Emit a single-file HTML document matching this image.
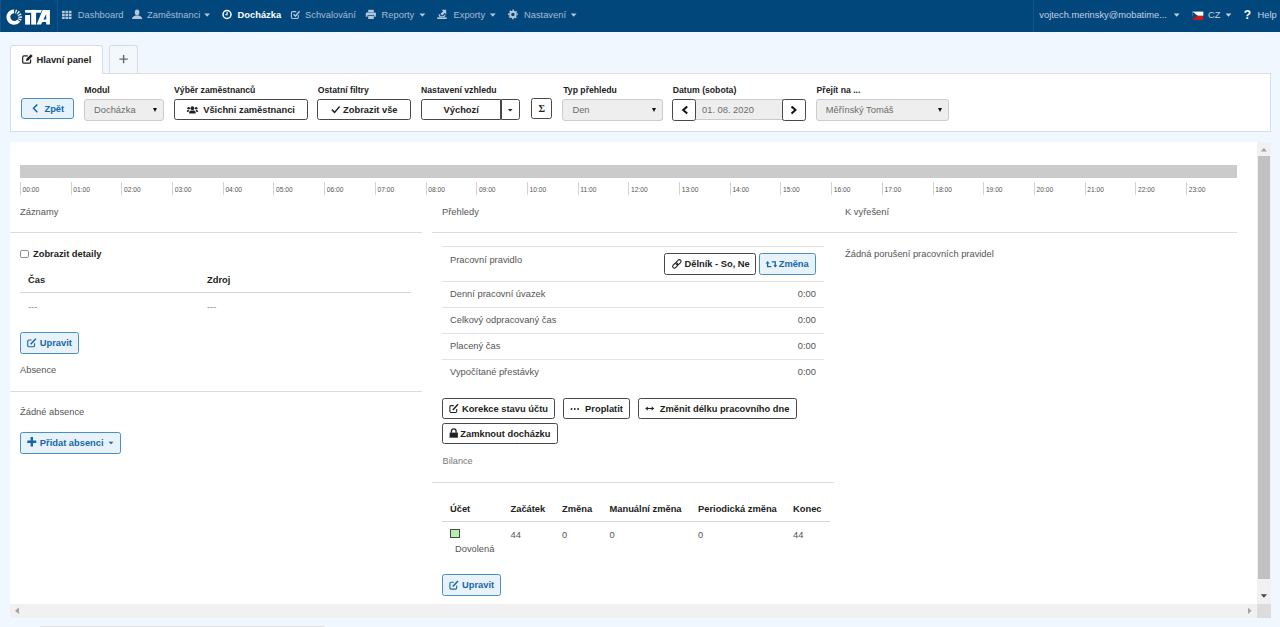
<!DOCTYPE html>
<html lang="cs">
<head>
<meta charset="utf-8">
<title>iTA - Docházka</title>
<style>
*{box-sizing:border-box;margin:0;padding:0}
html,body{width:1280px;height:627px;overflow:hidden}
body{background:#f0f7fe;font-family:"Liberation Sans",Arial,sans-serif;font-size:9.33px;color:#555;position:relative}
.abs{position:absolute;white-space:nowrap}
/* navbar */
#nav{position:absolute;left:0;top:0;width:1280px;height:32px;background:#02477b}
#nav .it{position:absolute;top:0;height:32px;line-height:30.6px;color:#a5bbd3;white-space:nowrap;font-size:9.33px}
#nav .it.act{color:#fff;font-weight:bold}
#nav svg{position:absolute}
.caret{position:absolute;top:13.5px;width:0;height:0;border-left:2.9px solid transparent;border-right:2.9px solid transparent;border-top:3.1px solid #a9bfd6}
#nav .ur{color:#c3d2e3}
.caret.ur{border-top-color:#c3d2e3}
/* tabs */
.tab{position:absolute;top:45px;height:29px;z-index:2;border:1px solid #d9dde2;border-bottom:none;border-radius:3px 3px 0 0;background:#fff;font-weight:bold;color:#222;line-height:28px}
#filter{position:absolute;left:10px;top:72.5px;width:1261px;height:59.4px;background:#fff;border:1px solid #cfe0f5;border-top-color:#dcdfe3}
.lbl{position:absolute;top:84.7px;font-weight:bold;color:#222;font-size:8.67px;white-space:nowrap;line-height:10px}
.btn{position:absolute;height:21px;border:1px solid #484848;border-radius:2.5px;background:#fff;color:#222;font-weight:bold;text-align:center;line-height:20.5px;white-space:nowrap;font-size:9.33px}
.btn.blue{border-color:#4a90c8;background:#e8f2fb;color:#1467ad}
.sel{position:absolute;height:22px;border:1px solid #ccc;border-radius:3px;background:#eee;color:#6c6c6c;line-height:21px;padding-left:9px;font-size:9.33px;white-space:nowrap}
.sel.noarr:after{display:none}
.sel:after{content:"";position:absolute;right:6px;top:8px;border-left:2.5px solid transparent;border-right:2.5px solid transparent;border-top:4px solid #111}
/* content */
#content{position:absolute;left:10px;top:141.6px;width:1247px;height:462.4px;background:#fff}
.hr{position:absolute;height:1px;background:#dcdcdc}
.h{position:absolute;color:#555;font-size:9.33px;white-space:nowrap;line-height:13.2px}
.t{position:absolute;white-space:nowrap;line-height:13.2px;color:#555}
.b{font-weight:bold;color:#222}
.tick{position:absolute;top:182px;width:1px;height:13px;background:#d2d2d2}
.tl{position:absolute;top:185.8px;font-size:6.67px;color:#555;line-height:8px}
</style>
</head>
<body>
<div id="nav">
  <div class="abs" style="left:0;top:0;width:1px;height:32px;background:#0f548c"></div>
  <div class="abs" style="left:57px;top:0;width:1px;height:32px;background:#0f548c"></div>
  <div class="abs" style="left:1033px;top:0;width:1px;height:32px;background:#0f548c"></div>
  <div class="it" style="left:77.8px">Dashboard</div>
  <div class="it" style="left:147px">Zaměstnanci</div>
  <div class="it act" style="left:237.6px">Docházka</div>
  <div class="it" style="left:305px">Schvalování</div>
  <div class="it" style="left:381.6px">Reporty</div>
  <div class="it" style="left:453.5px">Exporty</div>
  <div class="it" style="left:524px">Nastavení</div>
  <div class="it ur" style="left:1039.3px">vojtech.merinsky@mobatime...</div>
  <div class="it ur" style="left:1208px">CZ</div>
  <div class="it act" style="left:1243.8px;font-size:12px;line-height:31px">?</div>
  <div class="it ur" style="left:1257.6px">Help</div>
</div>

<div class="tab" style="left:10px;width:92.5px;padding-left:25.4px">Hlavní panel</div>
<div class="tab" style="left:109px;width:29.2px;background:#f3f8fd;height:27.5px"></div>
<div id="filter"></div>

<div class="btn blue" style="left:20.6px;top:97.9px;width:53.4px;height:21.5px;padding-left:14px;border-radius:3px;line-height:20.5px">Zpět</div>
<div class="lbl" style="left:84.3px">Modul</div>
<div class="sel" style="left:84.1px;top:98.6px;width:79.7px">Docházka</div>
<div class="lbl" style="left:174.1px">Výběr zaměstnanců</div>
<div class="btn" style="left:174.1px;top:99.4px;width:133.5px;padding-left:16.5px">Všichni zaměstnanci</div>
<div class="lbl" style="left:317.8px">Ostatní filtry</div>
<div class="btn" style="left:317.3px;top:99.4px;width:94px;padding-left:12px">Zobrazit vše</div>
<div class="lbl" style="left:421px">Nastavení vzhledu</div>
<div class="btn" style="left:421.2px;top:99.4px;width:80px;border-radius:2.5px 0 0 2.5px">Výchozí</div>
<div class="btn" style="left:500.5px;top:99.4px;width:19.7px;border-radius:0 2.5px 2.5px 0"></div>
<div class="btn" style="left:531.3px;top:97.9px;width:21px;font-family:'Liberation Serif',serif;font-size:10px">Σ</div>
<div class="lbl" style="left:563.2px">Typ přehledu</div>
<div class="sel" style="left:562.4px;top:99.4px;width:100.2px">Den</div>
<div class="lbl" style="left:672.8px">Datum (sobota)</div>
<div class="sel noarr" style="left:695px;top:99.4px;width:88px;border-radius:0;padding-left:6px;height:20.8px">01. 08. 2020</div>
<div class="btn" style="left:672.2px;top:98.7px;width:23.8px;height:22.3px"></div>
<div class="btn" style="left:782.2px;top:98.7px;width:23.8px;height:22.3px"></div>
<div class="lbl" style="left:816.6px">Přejít na ...</div>
<div class="sel" style="left:815.8px;top:98.7px;width:133.6px;height:22.3px;line-height:20.5px;padding-left:9px">Měřínský Tomáš</div>

<div id="content"></div>
<!--CONTENT-START-->
<div class="abs" style="left:20px;top:165.2px;width:1217px;height:12.8px;background:#cbcbcb"></div>
<div class="tick" style="left:19.9px"></div><div class="tl" style="left:22.6px">00:00</div>
<div class="tick" style="left:70.6px"></div><div class="tl" style="left:73.3px">01:00</div>
<div class="tick" style="left:121.3px"></div><div class="tl" style="left:124.0px">02:00</div>
<div class="tick" style="left:172.0px"></div><div class="tl" style="left:174.7px">03:00</div>
<div class="tick" style="left:222.7px"></div><div class="tl" style="left:225.4px">04:00</div>
<div class="tick" style="left:273.4px"></div><div class="tl" style="left:276.1px">05:00</div>
<div class="tick" style="left:324.1px"></div><div class="tl" style="left:326.8px">06:00</div>
<div class="tick" style="left:374.8px"></div><div class="tl" style="left:377.5px">07:00</div>
<div class="tick" style="left:425.5px"></div><div class="tl" style="left:428.2px">08:00</div>
<div class="tick" style="left:476.2px"></div><div class="tl" style="left:478.9px">09:00</div>
<div class="tick" style="left:526.9px"></div><div class="tl" style="left:529.6px">10:00</div>
<div class="tick" style="left:577.6px"></div><div class="tl" style="left:580.3px">11:00</div>
<div class="tick" style="left:628.3px"></div><div class="tl" style="left:631.0px">12:00</div>
<div class="tick" style="left:679.0px"></div><div class="tl" style="left:681.7px">13:00</div>
<div class="tick" style="left:729.7px"></div><div class="tl" style="left:732.4px">14:00</div>
<div class="tick" style="left:780.4px"></div><div class="tl" style="left:783.1px">15:00</div>
<div class="tick" style="left:831.1px"></div><div class="tl" style="left:833.8px">16:00</div>
<div class="tick" style="left:881.8px"></div><div class="tl" style="left:884.5px">17:00</div>
<div class="tick" style="left:932.5px"></div><div class="tl" style="left:935.2px">18:00</div>
<div class="tick" style="left:983.2px"></div><div class="tl" style="left:985.9px">19:00</div>
<div class="tick" style="left:1033.9px"></div><div class="tl" style="left:1036.6px">20:00</div>
<div class="tick" style="left:1084.6px"></div><div class="tl" style="left:1087.3px">21:00</div>
<div class="tick" style="left:1135.3px"></div><div class="tl" style="left:1138.0px">22:00</div>
<div class="tick" style="left:1186.0px"></div><div class="tl" style="left:1188.7px">23:00</div>

<!-- col1 -->
<div class="h" style="left:20px;top:206px">Záznamy</div>
<div class="hr" style="left:10px;top:232px;width:412px"></div>
<div class="abs" style="left:20.2px;top:249.5px;width:8.8px;height:8.4px;border:1px solid #8c8c8c;border-radius:1.8px;background:#fff"></div>
<div class="t b" style="left:33px;top:247.8px">Zobrazit detaily</div>
<div class="t b" style="left:28px;top:273.7px">Čas</div>
<div class="t b" style="left:207px;top:273.7px">Zdroj</div>
<div class="hr" style="left:20px;top:292.4px;width:391px;background:#d8d8d8;height:1px"></div>
<div class="t" style="left:28px;top:301px;color:#888">---</div>
<div class="t" style="left:207px;top:301px;color:#888">---</div>
<div class="btn blue" style="left:20px;top:332.1px;width:58.8px;height:21.6px;text-align:left;padding-left:18.8px">Upravit</div>
<div class="h" style="left:20px;top:364px">Absence</div>
<div class="hr" style="left:10px;top:391px;width:412px"></div>
<div class="t" style="left:20px;top:406px">Žádné absence</div>
<div class="btn blue" style="left:20px;top:431.7px;width:101px;height:22px;text-align:left;padding-left:18.8px;line-height:21px">Přidat absenci</div>
<!-- col2 -->
<div class="h" style="left:442px;top:206px">Přehledy</div>
<div class="hr" style="left:432px;top:232px;width:805px"></div>
<div class="hr" style="left:442px;top:246px;width:382px;background:#e3e3e3"></div>
<div class="t" style="left:450px;top:254px">Pracovní pravidlo</div>
<div class="btn" style="left:664.3px;top:253.4px;width:92.2px;height:21.3px;text-align:left;padding-left:19.2px">Dělník - So, Ne</div>
<div class="btn blue" style="left:759px;top:253.4px;width:57px;height:21.3px;text-align:left;padding-left:18.7px">Změna</div>
<div class="hr" style="left:442px;top:281px;width:382px;background:#e3e3e3"></div>
<div class="t" style="left:450px;top:288px">Denní pracovní úvazek</div><div class="t" style="left:776px;width:40px;text-align:right;top:288px">0:00</div>
<div class="hr" style="left:442px;top:307px;width:382px;background:#e3e3e3"></div>
<div class="t" style="left:450px;top:314px">Celkový odpracovaný čas</div><div class="t" style="left:776px;width:40px;text-align:right;top:314px">0:00</div>
<div class="hr" style="left:442px;top:333px;width:382px;background:#e3e3e3"></div>
<div class="t" style="left:450px;top:340px">Placený čas</div><div class="t" style="left:776px;width:40px;text-align:right;top:340px">0:00</div>
<div class="hr" style="left:442px;top:359px;width:382px;background:#e3e3e3"></div>
<div class="t" style="left:450px;top:366px">Vypočítané přestávky</div><div class="t" style="left:776px;width:40px;text-align:right;top:366px">0:00</div>
<div class="btn" style="left:442.4px;top:398.1px;width:112.5px;height:21.1px;text-align:left;padding-left:18.5px">Korekce stavu účtu</div>
<div class="btn" style="left:563.1px;top:398.1px;width:66.8px;height:21.1px;text-align:left;padding-left:21px">Proplatit</div>
<div class="btn" style="left:637.8px;top:398.1px;width:159px;height:21.1px;text-align:left;padding-left:21px">Změnit délku pracovního dne</div>
<div class="btn" style="left:442.4px;top:423.1px;width:115.4px;height:21.1px;text-align:left;padding-left:16.9px">Zamknout docházku</div>
<div class="h" style="left:442.6px;top:455.3px;font-size:9.2px;color:#777">Bilance</div>
<div class="hr" style="left:432px;top:481.5px;width:402px"></div>
<div class="t b" style="left:450px;top:502.6px">Účet</div>
<div class="t b" style="left:510.5px;top:502.6px">Začátek</div>
<div class="t b" style="left:562px;top:502.6px">Změna</div>
<div class="t b" style="left:609.5px;top:502.6px">Manuální změna</div>
<div class="t b" style="left:698px;top:502.6px">Periodická změna</div>
<div class="t b" style="left:793px;top:502.6px">Konec</div>
<div class="hr" style="left:442px;top:521.3px;width:388px;background:#d8d8d8;height:1px"></div>
<div class="abs" style="left:450.3px;top:529.1px;width:9.8px;height:9.4px;border:1px solid #4a4a4a;background:#b5efb0"></div>
<div class="t" style="left:455px;top:542.5px">Dovolená</div>
<div class="t" style="left:510.5px;top:529px">44</div>
<div class="t" style="left:562px;top:529px">0</div>
<div class="t" style="left:609.5px;top:529px">0</div>
<div class="t" style="left:698px;top:529px">0</div>
<div class="t" style="left:793px;top:529px">44</div>
<div class="btn blue" style="left:442.2px;top:574.4px;width:58.8px;height:21.2px;text-align:left;padding-left:18.8px">Upravit</div>
<!-- col3 -->
<div class="h" style="left:845px;top:206px">K vyřešení</div>
<div class="t" style="left:845px;top:248px">Žádná porušení pracovních pravidel</div>
<!-- scrollbars -->
<div class="abs" style="left:40px;top:626px;width:285px;height:1px;background:#dde1e5"></div>
<div class="abs" style="left:1257px;top:141.5px;width:14px;height:462.5px;background:#f1f1f1"></div>
<div class="abs" style="left:1258.1px;top:156.1px;width:11.5px;height:422.6px;background:#c1c1c1"></div>
<div class="abs" style="left:10px;top:604px;width:1247px;height:13.7px;background:#f1f1f1"></div>
<div class="abs" style="left:1257px;top:604px;width:14px;height:13.7px;background:#dcdcdc"></div>
<!--CONTENT-END-->
<svg id="ico" style="position:absolute;left:0;top:0;pointer-events:none;z-index:5" width="1280" height="627" viewBox="0 0 1280 627">
<!-- logo -->
<g fill="none" stroke="#fff" stroke-width="3.8"><path d="M18.77 20.67A5.8 5.8 0 1 1 14.10 11.30M15.41 11.43A5.8 5.8 0 0 1 16.56 11.80M17.61 12.41A5.8 5.8 0 0 1 18.51 13.22M19.22 14.20A5.8 5.8 0 0 1 19.72 15.31M19.97 16.49A5.8 5.8 0 0 1 19.97 17.71M19.78 18.70A5.8 5.8 0 0 1 19.32 19.82"/></g>
<g fill="#fff">
<rect x="25.1" y="15" width="4.9" height="9.6"/>
<path d="M25.1 9.9H41.9L40.8 12.7H25.1z"/>
<rect x="31.2" y="9.9" width="4.9" height="14.7"/>
<path fill-rule="evenodd" d="M42.6 9.9H49.9V24.6H46.2V22H42.4L41 24.6H36.6zM46.2 14.1V19.5H43.4z"/>
</g>
<!-- carets --><path d="M204.2 13.4H210.0L207.1 16.7z" fill="#b4c6da"/><path d="M419.5 13.4H425.3L422.4 16.7z" fill="#b4c6da"/><path d="M489.9 13.4H495.7L492.8 16.7z" fill="#b4c6da"/><path d="M570.8 13.4H576.6L573.7 16.7z" fill="#b4c6da"/><path d="M1173.8 13.4H1179.6L1176.7 16.7z" fill="#c3d2e3"/><path d="M1225.6 13.4H1231.4L1228.5 16.7z" fill="#c3d2e3"/>
<!-- th -->
<g fill="#b4c6da">
<rect x="62" y="10.8" width="2.7" height="2.3"/><rect x="65.4" y="10.8" width="2.7" height="2.3"/><rect x="68.8" y="10.8" width="2.7" height="2.3"/>
<rect x="62" y="13.75" width="2.7" height="2.3"/><rect x="65.4" y="13.75" width="2.7" height="2.3"/><rect x="68.8" y="13.75" width="2.7" height="2.3"/>
<rect x="62" y="16.7" width="2.7" height="2.3"/><rect x="65.4" y="16.7" width="2.7" height="2.3"/><rect x="68.8" y="16.7" width="2.7" height="2.3"/>
</g>
<!-- user -->
<g fill="#b4c6da"><ellipse cx="137.1" cy="12.4" rx="2.3" ry="2.8"/><path d="M132 19C132 16.6 133.6 16.3 135.6 15.4H138.6C140.6 16.3 142.2 16.6 142.2 19z"/></g>
<!-- clock -->
<circle cx="227" cy="14.5" r="4" fill="none" stroke="#fff" stroke-width="1.5"/><path d="M227.1 12V14.8H225.2" fill="none" stroke="#fff" stroke-width="1.1"/>
<!-- check -->
<path d="M298.3 15V17.3Q298.3 18.5 297.1 18.5H292.6Q291.4 18.5 291.4 17.3V12.8Q291.4 11.6 292.6 11.6H296.3" fill="none" stroke="#b4c6da" stroke-width="1.1"/>
<path d="M293.6 14.3L295.4 16.2L299.6 11.2" fill="none" stroke="#b4c6da" stroke-width="1.5"/>
<!-- print -->
<g fill="#b4c6da"><rect x="368.2" y="9.8" width="5.6" height="2.4"/><path d="M366.6 12.6H375.2Q375.9 12.6 375.9 13.3V16.8H374.3V15.3H367.5V16.8H365.8V13.3Q365.8 12.6 366.6 12.6z"/><rect x="368.2" y="16" width="5.6" height="3"/></g>
<!-- export -->
<g fill="#b4c6da"><rect x="437.3" y="17.3" width="9.4" height="1.7"/><path d="M441.6 9.8H446.2V14.4L444.7 12.9L442.2 15.6L440.4 13.9L443.1 11.3z"/><path d="M438.4 14.2H439.6L440.6 16.2H443.4L444.4 14.8H445.6L444.6 16.9H439.4z"/></g>
<!-- gear -->
<circle cx="512.9" cy="14.4" r="2.7" fill="none" stroke="#b4c6da" stroke-width="1.9"/>
<circle cx="512.9" cy="14.4" r="4.1" fill="none" stroke="#b4c6da" stroke-width="1.5" stroke-dasharray="1.6 1.62" transform="rotate(-13 512.9 14.4)"/>
<!-- flag -->
<rect x="1192.3" y="11.6" width="11" height="4.2" fill="#fff"/><rect x="1192.3" y="15.8" width="11" height="4.1" fill="#d7141a"/><path d="M1192.3 11.6L1197.8 15.75L1192.3 19.9z" fill="#11457e"/>
<!-- tab icons -->
<path d="M30.6 59.5V61.9Q30.6 63.2 29.3 63.2H24Q22.7 63.2 22.7 61.9V57.1Q22.7 55.8 24 55.8H27.8" fill="none" stroke="#222" stroke-width="1.2"/>
<path d="M26 61L26.4 58.7L30.9 54.3L32.7 56.1L28.3 60.6z" fill="#222"/>
<path d="M119.4 59.1H127.8M123.6 54.9V63.3" stroke="#666" stroke-width="1.4" fill="none"/>
<!-- zpet chevron -->
<path d="M37.3 104.4L33.5 108.3L37.3 112.2" fill="none" stroke="#1467ad" stroke-width="1.5"/>
<!-- users icon -->
<g fill="#222"><circle cx="192.4" cy="108.2" r="1.9"/><path d="M189.2 113.4V112.3Q189.2 110.6 191 110.6H193.8Q195.6 110.6 195.6 112.3V113.4z"/>
<circle cx="188.6" cy="108.3" r="1.3"/><circle cx="196.2" cy="108.3" r="1.3"/><path d="M186.9 112V111.3Q186.9 110.1 188.2 110.1H189.3Q188.5 110.8 188.5 112zM197.9 112V111.3Q197.9 110.1 196.6 110.1H195.5Q196.3 110.8 196.3 112z"/></g>
<!-- check -->
<path d="M331.8 109.6L334.6 112.4L339.6 106.6" fill="none" stroke="#222" stroke-width="1.5"/>
<!-- small caret -->
<path d="M507.9 109.1H512.6L510.25 111.6z" fill="#222"/>
<!-- chevrons date -->
<path d="M687.2 106.4L683.2 110L687.2 113.6" fill="none" stroke="#111" stroke-width="2"/>
<path d="M791.5 106.4L795.5 110L791.5 113.6" fill="none" stroke="#111" stroke-width="2"/>
<!-- content icons -->
<path d="M34.55 343.30V345.70Q34.55 346.80 33.45 346.80H28.85Q27.75 346.80 27.75 345.70V341.10Q27.75 340.00 28.85 340.00H31.55" fill="none" stroke="#1467ad" stroke-width="1.1"/><path d="M30.65 344.30L35.85 338.70" fill="none" stroke="#1467ad" stroke-width="1.5"/>
<path d="M456.70 585.60V588.00Q456.70 589.10 455.60 589.10H451.00Q449.90 589.10 449.90 588.00V583.40Q449.90 582.30 451.00 582.30H453.70" fill="none" stroke="#1467ad" stroke-width="1.1"/><path d="M452.80 586.60L458.00 581.00" fill="none" stroke="#1467ad" stroke-width="1.5"/>
<path d="M456.70 408.95V411.35Q456.70 412.45 455.60 412.45H451.00Q449.90 412.45 449.90 411.35V406.75Q449.90 405.65 451.00 405.65H453.70" fill="none" stroke="#222" stroke-width="1.1"/><path d="M452.80 409.95L458.00 404.35" fill="none" stroke="#222" stroke-width="1.5"/>
<path d="M27.3 441.7H36.3M31.8 437V446.4" stroke="#1467ad" stroke-width="2.4" fill="none"/>
<path d="M108.5 441.7H113.5L111 444.2z" fill="#1467ad"/>
<g fill="none" stroke="#222" stroke-width="1.1" transform="rotate(-45 676.85 263.9)"><rect x="671.6" y="262.2" width="6" height="3.4" rx="1.7"/><rect x="676.1" y="262.2" width="6" height="3.4" rx="1.7"/></g>
<g fill="none" stroke="#1467ad" stroke-width="1.3"><path d="M767.6 262V266.6H771.3"/><path d="M771.7 261.8H775.3V266.2"/></g><path d="M765.6 263.6L767.6 261L769.6 263.6zM773.3 265L775.3 267.6L777.3 265z" fill="#1467ad"/>
<g fill="#222"><circle cx="571.5" cy="409" r="0.95"/><circle cx="574.8" cy="409" r="0.95"/><circle cx="578.1" cy="409" r="0.95"/></g>
<path d="M647 408.5H652.5" stroke="#222" stroke-width="1.1"/><path d="M645.2 408.5L647.8 406.6V410.4zM654.3 408.5L651.7 406.6V410.4z" fill="#222"/>
<path d="M449.6 432.6H457.9V437.7H449.6z" fill="#222"/><path d="M451.4 432.8V431.2A2.35 2.35 0 0 1 456.1 431.2V432.8" fill="none" stroke="#222" stroke-width="1.3"/>
<!-- scroll arrows -->
<path d="M1260.8 151.4L1263.9 148L1267 151.4z" fill="#a3a3a3"/>
<path d="M1260.8 594.3L1263.9 597.8L1267 594.3z" fill="#444"/>
<path d="M19 607.5L15 610.8L19 614.1z" fill="#a3a3a3"/>
<path d="M1248 607.7L1251.6 610.8L1248 613.9z" fill="#a3a3a3"/>
</svg>
</body>
</html>
